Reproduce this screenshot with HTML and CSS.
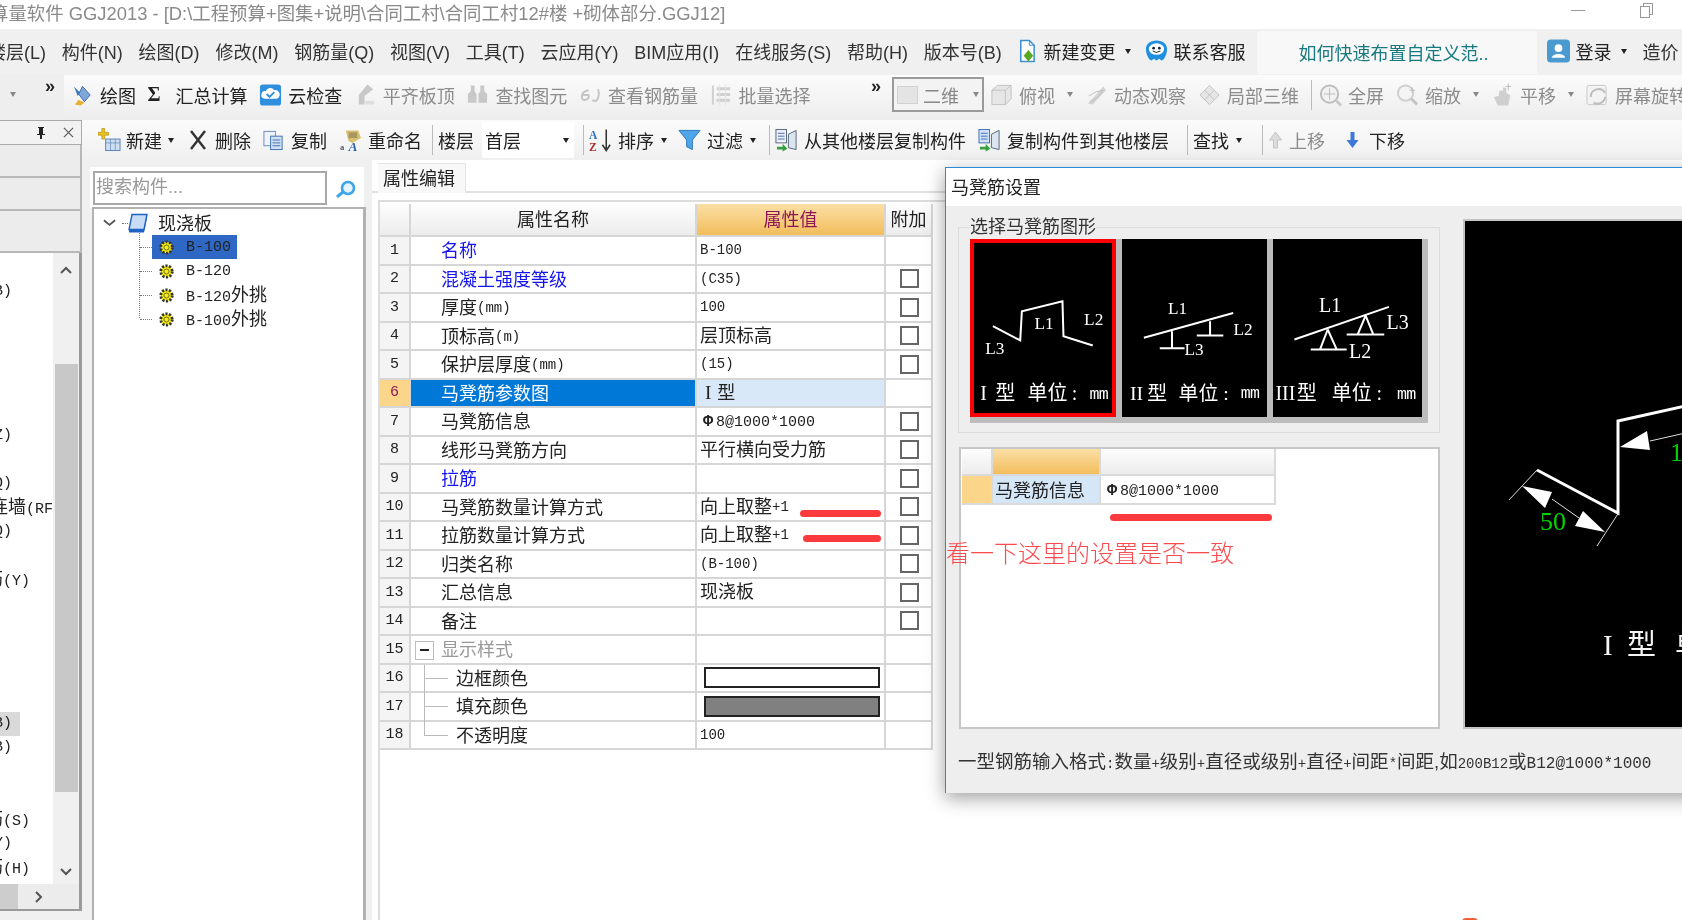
FILE: index.html
```html
<!DOCTYPE html>
<html lang="zh-CN">
<head>
<meta charset="utf-8">
<title>GGJ2013</title>
<link rel="stylesheet" href="styles.css">
</head>
<body>
<div class="app">
  <header class="titlebar">
    <span class="title-text">算量软件 GGJ2013 - [D:\工程预算+图集+说明\合同工村\合同工村12#楼 +砌体部分.GGJ12]</span>
    <span class="win-min"></span>
    <span class="win-max"></span>
  </header>

  <nav class="menubar">
    <span class="menu-item first">楼层(L)</span>
    <span class="menu-item">构件(N)</span>
    <span class="menu-item">绘图(D)</span>
    <span class="menu-item">修改(M)</span>
    <span class="menu-item">钢筋量(Q)</span>
    <span class="menu-item">视图(V)</span>
    <span class="menu-item">工具(T)</span>
    <span class="menu-item">云应用(Y)</span>
    <span class="menu-item">BIM应用(I)</span>
    <span class="menu-item">在线服务(S)</span>
    <span class="menu-item">帮助(H)</span>
    <span class="menu-item">版本号(B)</span>
    <span class="tool menu-tool change">
      <svg class="ic" viewBox="0 0 24 24"><path d="M6 1h9l5 5v17H6z" fill="#fff" stroke="#3f8fd0" stroke-width="1.6"/><path d="M15 1v5h5" fill="none" stroke="#3f8fd0"/><path d="M14 11l5 6-5 6-5-6z" fill="#58a820"/></svg>
      <span>新建变更</span><i class="caret"></i>
    </span>
    <span class="tool menu-tool">
      <svg class="ic" viewBox="0 0 24 24"><path d="M12 1c7 0 11 4 11 9 0 7-4 12-6 12l-2-2-3 2-3-2-2 2c-2 0-6-5-6-12C1 5 5 1 12 1z" fill="#1f8fe0"/><ellipse cx="12" cy="10" rx="8" ry="6" fill="#fff"/><circle cx="9" cy="9" r="1.4" fill="#123"/><circle cx="15" cy="9" r="1.4" fill="#123"/><path d="M8 12q4 3 8 0" stroke="#123" fill="none"/></svg>
      <span>联系客服</span>
    </span>
    <span class="help-tab">如何快速布置自定义范..</span>
    <span class="tool login">
      <svg class="ic" viewBox="0 0 24 24"><rect x="0" y="0" width="24" height="24" rx="4" fill="#4a9ad0"/><circle cx="12" cy="9" r="4" fill="#fff"/><path d="M5 19c1-5 13-5 14 0z" fill="#fff"/></svg>
      <span>登录</span><i class="caret"></i>
    </span>
    <span class="menu-item">造价</span>
  </nav>

  <div class="toolbar tb1">
    <div class="grp grp-a"><i class="caret grey"></i><span class="more">»</span></div>
    <div class="grp grp-b">
      <span class="tool"><svg class="ic" viewBox="0 0 24 24"><path d="M3 3l7 7-3 3z" fill="#3d7bc4"/><path d="M12 3l8 9-6 7-6-8z" fill="#7fa8d8" stroke="#3d6ba8"/><path d="M8 17l6 3-4 3-6-1z" fill="#e8b030"/></svg><span>绘图</span></span>
      <span class="tool"><b class="sigma">Σ</b><span class="wide-gap">汇总计算</span></span>
      <span class="tool"><svg class="ic" viewBox="0 0 24 24"><rect x="1" y="1" width="22" height="22" rx="3" fill="#2f8fdc"/><path d="M6 16a4 4 0 0 1 1-8 5 5 0 0 1 9-1 4 4 0 0 1 2 9z" fill="#fff"/><path d="M8 11l3 3 5-5" fill="none" stroke="#2f8fdc" stroke-width="2"/></svg><span>云检查</span></span>
      <span class="tool off"><svg class="ic" viewBox="0 0 24 24"><path d="M14 1l6 5-9 7v9H5V12z" fill="#c8c8c8"/><path d="M12 18h9v4h-9z" fill="#ddd"/></svg><span>平齐板顶</span></span>
      <span class="tool off"><svg class="ic" viewBox="0 0 24 24"><path d="M5 2h4v6l2 3v9H2v-9l3-3zM15 2h4v6l3 3v9h-9v-9l2-3z" fill="#c8c8c8"/></svg><span>查找图元</span></span>
      <span class="tool off"><svg class="ic" viewBox="0 0 24 24"><path d="M10 7Q3 8 3 14q0 4 4 3t3-5H4M20 6q2 8-2 12-2 1-4-1" fill="none" stroke="#c4c4c4" stroke-width="2"/></svg><span>查看钢筋量</span></span>
      <span class="tool off"><svg class="ic" viewBox="0 0 24 24"><path d="M2 2h2v20H2zM7 4h14v3H7zM7 10h14v3H7zM7 16h14v3H7z" fill="#d0d0d0"/><path d="M10 1v22M16 1v22" stroke="#e2e2e2"/></svg><span>批量选择</span></span>
      <span class="more push">»</span>
    </div>
    <div class="grp grp-c">
      <span class="combo-2d"><i class="swatch-2d"></i><span>二维</span><i class="caret grey"></i></span>
      <span class="tool off"><svg class="ic" viewBox="0 0 24 24"><path d="M2 7l6-5h14v14l-6 6H2z" fill="#e6e6e6" stroke="#c0c0c0"/><path d="M2 7h14v15M16 7l6-5" fill="none" stroke="#c0c0c0"/></svg><span>俯视</span><i class="caret grey"></i></span>
      <span class="tool off"><svg class="ic" viewBox="0 0 24 24"><path d="M3 21L19 3l3 4-14 15z" fill="#d4d4d4"/><path d="M4 13q8-6 16-6M5 19q8-2 13-11" fill="none" stroke="#bbb"/></svg><span>动态观察</span></span>
      <span class="tool off"><svg class="ic" viewBox="0 0 24 24"><path d="M12 2l10 10-10 10L2 12z" fill="#e6e6e6" stroke="#c0c0c0"/><path d="M7 7l10 10M17 7L7 17" stroke="#c0c0c0"/></svg><span>局部三维</span></span>
      <i class="sep"></i>
      <span class="tool off"><svg class="ic" viewBox="0 0 24 24"><circle cx="11" cy="11" r="9" fill="#f2f2f2" stroke="#bdbdbd" stroke-width="2"/><path d="M11 5v12M5 11h12" stroke="#bdbdbd"/><path d="M18 18l5 5" stroke="#c8c8c8" stroke-width="3"/></svg><span>全屏</span></span>
      <span class="tool off"><svg class="ic" viewBox="0 0 24 24"><circle cx="10" cy="10" r="8" fill="#f4f4f4" stroke="#cfcfcf" stroke-width="2"/><path d="M16 16l6 6" stroke="#c4c4c4" stroke-width="3"/><path d="M17 4v6M14 7h6" stroke="#bdbdbd"/></svg><span>缩放</span><i class="caret grey"></i></span>
      <span class="tool off"><svg class="ic" viewBox="0 0 24 24"><path d="M7 23l-4-9 5-1 1-6 3 1 1-4 3 1v5l4 2-2 11z" fill="#cfcfcf"/><path d="M18 0v7M15 3h6" stroke="#bdbdbd"/></svg><span>平移</span><i class="caret grey"></i></span>
      <span class="tool off"><svg class="ic" viewBox="0 0 24 24"><rect x="1" y="2" width="20" height="20" rx="2" fill="#f3f3f3" stroke="#c8c8c8"/><path d="M5 14a8 8 0 0 1 15-4M20 14a8 8 0 0 1-12 6" fill="none" stroke="#bdbdbd" stroke-width="2"/></svg><span>屏幕旋转</span></span>
    </div>
  </div>

  <div class="work">
    <aside class="left">
      <div class="pin-head">
        <svg class="pin" viewBox="0 0 10 14"><path d="M2 1h6v1H7v6h2v1H6v4H4V9H1V8h2V2H2z" fill="#222"/></svg>
        <svg class="close" viewBox="0 0 12 12"><path d="M1 1l10 10M11 1L1 11" stroke="#555" stroke-width="1.2"/></svg>
      </div>
      <div class="left-box b33"></div>
      <div class="left-box b33"></div>
      <div class="left-box b42"></div>
      <div class="list-wrap">
        <div class="list">
          <div class="li"></div>
          <div class="li"><span class="cut-a">B)</span></div>
          <div class="li"></div><div class="li"></div><div class="li"></div><div class="li"></div>
          <div class="li"></div>
          <div class="li"><span class="cut-a">Z)</span></div>
          <div class="li"></div>
          <div class="li"><span class="cut-a">Q)</span></div>
          <div class="li"><span class="cut-c">连墙<b class="mono">(RF</b></span></div>
          <div class="li"><span class="cut-a">Q)</span></div>
          <div class="li"></div>
          <div class="li"><span class="cut-b">筋<b class="mono">(Y)</b></span></div>
          <div class="li"></div><div class="li"></div><div class="li"></div><div class="li"></div><div class="li"></div>
          <div class="li hl"><span class="cut-a">B)</span></div>
          <div class="li"><span class="cut-a">B)</span></div>
          <div class="li"></div><div class="li"></div>
          <div class="li"><span class="cut-b">筋<b class="mono">(S)</b></span></div>
          <div class="li"><span class="cut-a">Y)</span></div>
          <div class="li"><span class="cut-b">筋<b class="mono">(H)</b></span></div>
        </div>
        <div class="vscroll">
          <svg class="chev" viewBox="0 0 12 8"><path d="M1 7l5-5 5 5" fill="none" stroke="#555" stroke-width="2"/></svg>
          <div class="vthumb"></div>
          <svg class="chev" viewBox="0 0 12 8"><path d="M1 1l5 5 5-5" fill="none" stroke="#555" stroke-width="2"/></svg>
        </div>
      </div>
      <div class="hscroll">
        <div class="hthumb"></div>
        <svg class="chev-r" viewBox="0 0 8 12"><path d="M1 1l5 5-5 5" fill="none" stroke="#555" stroke-width="2"/></svg>
      </div>
    </aside>

    <div class="right">
      <div class="toolbar tb2">
        <span class="tool t-new"><svg class="ic" viewBox="0 0 24 24"><path d="M4 0h3v4h4v3H7v4H4V7H0V4h4z" fill="#e8c020" stroke="#a88a10" stroke-width=".6"/><rect x="8" y="11" width="15" height="12" fill="#cfdff2" stroke="#5a80b8"/><path d="M8 15h15M13 11v12M18 11v12" stroke="#5a80b8" stroke-width=".7"/></svg><span>新建</span><i class="caret"></i></span>
        <span class="tool t-del"><svg class="ic small" viewBox="0 0 18 20"><path d="M2 1l14 18M16 1L2 19" stroke="#333" stroke-width="2.4"/></svg><span>删除</span></span>
        <span class="tool t-copy"><svg class="ic" viewBox="0 0 24 24"><rect x="2" y="3" width="12" height="15" fill="#f0f4fa" stroke="#6a8cb8"/><rect x="9" y="8" width="12" height="14" fill="#cfe0f4" stroke="#3f70b0"/><path d="M11 12h8M11 15h8M11 18h8" stroke="#3f70b0"/></svg><span>复制</span></span>
        <span class="tool t-ren"><svg class="ic" viewBox="0 0 24 24"><path d="M7 2h13l3 8-9 5-4-2z" fill="#d8c070"/><path d="M10 4h9v6h-9z" fill="#a89860"/><text class="ic-a" x="1" y="22">a</text><text class="ic-A" x="10" y="23">A</text></svg><span>重命名</span></span>
        <i class="sep"></i>
        <span class="floor-label">楼层</span>
        <span class="floor-combo"><span>首层</span><i class="caret"></i></span>
        <i class="sep"></i>
        <span class="tool t-sort"><svg class="ic" viewBox="0 0 24 24"><text class="ic-az blue" x="0" y="11">A</text><text class="ic-az red" x="0" y="23">Z</text><path d="M18 1v20M14 17l4 6 4-6" fill="none" stroke="#333" stroke-width="1.6"/></svg><span>排序</span><i class="caret"></i></span>
        <span class="tool t-filter"><svg class="ic" viewBox="0 0 24 24"><path d="M1 2h22l-8 10v10l-6-3v-7z" fill="#4ea6e8" stroke="#2a78c0"/></svg><span>过滤</span><i class="caret"></i></span>
        <i class="sep"></i>
        <span class="tool t-from"><svg class="ic" viewBox="0 0 24 24"><rect x="1" y="1" width="11" height="14" fill="#eef" stroke="#567"/><path d="M3 5h7M3 8h7M3 11h7" stroke="#3f70b0"/><path d="M14 6l8-4v20l-8-2z" fill="#dbe4ef" stroke="#567"/><path d="M2 19h6v-3l5 5-5 3v-2H2z" fill="#37a040"/></svg><span>从其他楼层复制构件</span></span>
        <span class="tool t-to"><svg class="ic" viewBox="0 0 24 24"><rect x="1" y="1" width="11" height="14" fill="#cfe0f8" stroke="#3f70b0"/><path d="M3 5h7M3 8h7M3 11h7" stroke="#3f70b0"/><path d="M14 6l8-4v20l-8-2z" fill="#dbe4ef" stroke="#567"/><path d="M2 19h6v-3l5 5-5 3v-2H2z" fill="#37a040"/></svg><span>复制构件到其他楼层</span></span>
        <i class="sep"></i>
        <span class="tool t-find"><span>查找</span><i class="caret"></i></span>
        <i class="sep"></i>
        <span class="tool off t-up"><svg class="ic arrow" viewBox="0 0 14 18"><path d="M7 1l6 8H9v8H5V9H1z" fill="#dcdcdc" stroke="#c4c4c4"/></svg><span>上移</span></span>
        <span class="tool t-down"><svg class="ic arrow" viewBox="0 0 14 18"><path d="M7 17l6-8H9V1H5v8H1z" fill="#3f78d8"/></svg><span>下移</span></span>
      </div>

      <div class="content">
        <section class="tree-col">
          <div class="search">
            <span class="search-field">搜索构件...</span>
            <svg class="search-ic" viewBox="0 0 22 18"><circle cx="13" cy="8" r="6" fill="#e4f4fd" stroke="#3ea4e6" stroke-width="2.6"/><path d="M8 12l-6 5" stroke="#3ea4e6" stroke-width="3"/></svg>
          </div>
          <div class="tree">
            <div class="root">
              <svg class="tw" viewBox="0 0 14 8"><path d="M1 1l6 5 6-5" fill="none" stroke="#555" stroke-width="2"/></svg>
              <i class="dots-h"></i>
              <svg class="book" viewBox="0 0 20 20"><path d="M4 1h15l-3 15H1z" fill="#c7dcf6" stroke="#1f62c4" stroke-width="1.4"/><path d="M1 16h15l3-15v3l-3 15H1z" fill="#1f62c4"/></svg>
              <span class="root-label">现浇板</span>
            </div>
            <div class="kids">
              <div class="kid-row"><span class="kid sel"><svg class="gear" viewBox="0 0 16 16"><circle cx="8" cy="8" r="5.4" fill="#f6ee00" stroke="#333" stroke-width="2.6" stroke-dasharray="2 1.4"/><circle cx="8" cy="8" r="2.4" fill="#f6ee00" stroke="#554" stroke-width=".8"/></svg><span class="mono">B-100</span></span></div>
              <div class="kid-row"><span class="kid"><svg class="gear" viewBox="0 0 16 16"><circle cx="8" cy="8" r="5.4" fill="#f6ee00" stroke="#333" stroke-width="2.6" stroke-dasharray="2 1.4"/><circle cx="8" cy="8" r="2.4" fill="#f6ee00" stroke="#554" stroke-width=".8"/></svg><span class="mono">B-120</span></span></div>
              <div class="kid-row"><span class="kid"><svg class="gear" viewBox="0 0 16 16"><circle cx="8" cy="8" r="5.4" fill="#f6ee00" stroke="#333" stroke-width="2.6" stroke-dasharray="2 1.4"/><circle cx="8" cy="8" r="2.4" fill="#f6ee00" stroke="#554" stroke-width=".8"/></svg><span class="mixed"><b class="mono">B-120</b>外挑</span></span></div>
              <div class="kid-row"><span class="kid"><svg class="gear" viewBox="0 0 16 16"><circle cx="8" cy="8" r="5.4" fill="#f6ee00" stroke="#333" stroke-width="2.6" stroke-dasharray="2 1.4"/><circle cx="8" cy="8" r="2.4" fill="#f6ee00" stroke="#554" stroke-width=".8"/></svg><span class="mixed"><b class="mono">B-100</b>外挑</span></span></div>
            </div>
          </div>
        </section>

        <section class="props">
          <div class="tabbar"><span class="tab">属性编辑</span></div>
          <div class="table-area">
            <div class="grid">
              <div class="c hd"></div><div class="c hd ctr">属性名称</div><div class="c hd-on ctr">属性值</div><div class="c hd ctr">附加</div>

              <div class="c num">1</div><div class="c name link">名称</div><div class="c val"><span class="m">B-100</span></div><div class="c add"></div>
              <div class="c num">2</div><div class="c name link">混凝土强度等级</div><div class="c val"><span class="m">(C35)</span></div><div class="c add"><i class="chk"></i></div>
              <div class="c num">3</div><div class="c name">厚度<span class="m">(mm)</span></div><div class="c val"><span class="m">100</span></div><div class="c add"><i class="chk"></i></div>
              <div class="c num">4</div><div class="c name">顶标高<span class="m">(m)</span></div><div class="c val">层顶标高</div><div class="c add"><i class="chk"></i></div>
              <div class="c num">5</div><div class="c name">保护层厚度<span class="m">(mm)</span></div><div class="c val"><span class="m">(15)</span></div><div class="c add"><i class="chk"></i></div>
              <div class="c num on">6</div><div class="c name sel">马凳筋参数图</div><div class="c val sel-val"><span class="type-i">I</span> 型</div><div class="c add"></div>
              <div class="c num">7</div><div class="c name">马凳筋信息</div><div class="c val"><span class="m rebar"><b>Φ</b>8@1000*1000</span></div><div class="c add"><i class="chk"></i></div>
              <div class="c num">8</div><div class="c name">线形马凳筋方向</div><div class="c val">平行横向受力筋</div><div class="c add"><i class="chk"></i></div>
              <div class="c num">9</div><div class="c name link">拉筋</div><div class="c val"></div><div class="c add"><i class="chk"></i></div>
              <div class="c num">10</div><div class="c name">马凳筋数量计算方式</div><div class="c val">向上取整<span class="m">+1</span><i class="mark m10"></i></div><div class="c add"><i class="chk"></i></div>
              <div class="c num">11</div><div class="c name">拉筋数量计算方式</div><div class="c val">向上取整<span class="m">+1</span><i class="mark m11"></i></div><div class="c add"><i class="chk"></i></div>
              <div class="c num">12</div><div class="c name">归类名称</div><div class="c val"><span class="m">(B-100)</span></div><div class="c add"><i class="chk"></i></div>
              <div class="c num">13</div><div class="c name">汇总信息</div><div class="c val">现浇板</div><div class="c add"><i class="chk"></i></div>
              <div class="c num">14</div><div class="c name">备注</div><div class="c val"></div><div class="c add"><i class="chk"></i></div>
              <div class="c num">15</div><div class="c name group"><i class="minus"></i><span>显示样式</span></div><div class="c val"></div><div class="c add"></div>
              <div class="c num">16</div><div class="c name sub">边框颜色</div><div class="c val"><i class="color white"></i></div><div class="c add"></div>
              <div class="c num">17</div><div class="c name sub">填充颜色</div><div class="c val"><i class="color gray"></i></div><div class="c add"></div>
              <div class="c num">18</div><div class="c name sub last">不透明度</div><div class="c val"><span class="m">100</span></div><div class="c add"></div>
            </div>
          </div>
        </section>
      </div>
    </div>
  </div>

  <div class="dialog">
    <div class="dlg-title">马凳筋设置</div>
    <div class="dlg-body">
      <div class="dlg-row">
        <div class="dlg-left">
          <div class="groupbox">
            <span class="legend">选择马凳筋图形</span>
            <div class="shots">
              <div class="shot s1 picked">
                <svg viewBox="75 238 437 535">
                  <path class="wire" d="M143 500L225 543 230 455 352 425 355 530 443 558"/>
                  <text class="lbl" x="120" y="583">L3</text><text class="lbl" x="268" y="510">L1</text><text class="lbl" x="417" y="497">L2</text>
                  <text class="cap" x="105" y="722">I</text><text class="cap" x="150" y="722">型</text><text class="cap" x="247" y="722">单位</text><text class="cap" x="380" y="722">:</text><text class="cap unit" x="433" y="718">mm</text>
                </svg>
              </div>
              <div class="shot s2">
                <svg viewBox="529 238 438 535">
                  <path class="wire" d="M595 535L865 460M680 515V567M643 567H718M795 485V528M755 528H835"/>
                  <text class="lbl" x="668" y="462">L1</text><text class="lbl" x="866" y="527">L2</text><text class="lbl" x="718" y="587">L3</text>
                  <text class="cap" x="553" y="722">II</text><text class="cap" x="605" y="722">型</text><text class="cap" x="700" y="722">单位</text><text class="cap" x="835" y="722">:</text><text class="cap unit" x="888" y="718">mm</text>
                </svg>
              </div>
              <div class="shot s3">
                <svg viewBox="985 238 445 535">
                  <path class="wire" d="M1048 540L1332 442M1148 510L1125 570M1148 510L1175 570M1097 570H1205M1262 468L1238 525M1262 468L1285 525M1205 525H1318"/>
                  <text class="lbl big" x="1122" y="457">L1</text><text class="lbl big" x="1325" y="510">L3</text><text class="lbl big" x="1212" y="596">L2</text>
                  <text class="cap" x="991" y="722">III</text><text class="cap" x="1055" y="722">型</text><text class="cap" x="1160" y="722">单位</text><text class="cap" x="1295" y="722">:</text><text class="cap unit" x="1356" y="718">mm</text>
                </svg>
              </div>
            </div>
          </div>
          <div class="infobox">
            <div class="mini">
              <div class="mc mh"></div><div class="mc mh-on"></div><div class="mc mh"></div>
              <div class="mc mn-on"></div><div class="mc mname">马凳筋信息</div><div class="mc mval"><span class="m rebar"><b>Φ</b>8@1000*1000</span></div>
            </div>
            <i class="mark m-info"></i>
            <p class="note">看一下这里的设置是否一致</p>
          </div>
        </div>
        <div class="preview">
          <svg class="preview-svg" viewBox="1465 221 217 506">
            <path class="bar" d="M1537 470L1618 513V421L1690 405"/>
            <path class="thin" d="M1537 470L1509 500M1618.500 513L1597 546M1552 499L1579 518M1650 441L1690 432"/>
            <path class="head" d="M1522 486L1552 492 1545 508zM1605 532L1575 526 1583 511zM1620 447L1647 431 1650 450z"/>
            <text class="dim" x="1540" y="530">50</text>
            <text class="dim" x="1670" y="461">1</text>
            <text class="big-cap" x="1603" y="655">I</text><text class="big-cap" x="1627" y="655">型</text><text class="big-cap" x="1675" y="655">单</text>
          </svg>
        </div>
      </div>
      <p class="hint">一型钢筋输入格式<span class="m">:</span>数量<span class="m">+</span>级别<span class="m">+</span>直径或级别<span class="m">+</span>直径<span class="m">+</span>间距<span class="m">*</span>间距,如<span class="m">200B12</span>或<span class="ml">B12@1000*1000</span></p>
    </div>
  </div>
  <i class="red-tip"></i>
</div>
</body>
</html>
```

FILE: styles.css
```css
* { box-sizing: border-box; }
html, body { margin: 0; width: 1682px; height: 920px; overflow: hidden; background: #fff; }
body { font-family: "Liberation Sans", "Noto Sans CJK SC", sans-serif; font-size: 18px; color: #222; }
i { display: block; font-style: normal; }
p { margin: 0; }
.app { position: relative; width: 1682px; height: 920px; overflow: hidden; display: flex; flex-direction: column; filter: blur(.35px); }
.mono, .m, .ml { font-family: "Liberation Mono", "Noto Sans CJK SC", monospace; font-weight: 400; }
.m { font-size: 14px; }
.ml { font-size: 16px; }
.mono { font-size: 15px; }
.rebar { margin-left: 3px; font-size: 15px; }
.rebar b { display: inline-block; width: 13px; font-size: 17px; font-weight: 700; }
.type-i { font-family: "Liberation Serif", serif; font-size: 19px; }

/* title */
.titlebar { height: 29px; flex: none; background: #fff; display: flex; align-items: center; position: relative; white-space: nowrap; padding-bottom: 6px; }
.title-text { margin-left: -10px; color: #8a8a8a; font-size: 18.4px; }
.win-min { position: absolute; left: 1571px; top: 10px; width: 14px; height: 1px; background: #999; }
.win-max { position: absolute; left: 1640px; top: 6px; width: 10px; height: 12px; border: 1px solid #999; background: #fff; box-shadow: 3px -3px 0 -1px #fff, 3px -3px 0 0 #999; }

/* menu */
.menubar { height: 46px; flex: none; background: #f0f0f0; display: flex; align-items: center; white-space: nowrap; padding-bottom: 2px; }
.menu-item { margin-right: 15.8px; flex: none; color: #333; }
.menu-item.first { margin-left: -12px; }
.tool { display: flex; align-items: center; gap: 6px; margin-right: 11px; flex: none; white-space: nowrap; }
.menu-tool { margin-right: 14px; }
.change { margin-left: -3px; }
.help-tab { width: 280px; height: 43px; flex: none; margin: 2px 10px 0 -3px; background: #f8f8f8; border-radius: 4px 4px 0 0; display: flex; align-items: center; padding-left: 42px; color: #177a80; }
.login { margin-right: 16px; }
.ic { width: 23px; height: 24px; flex: none; display: block; }
.ic.small { width: 18px; height: 20px; }
.ic.arrow { width: 15px; height: 18px; }
.caret { width: 0; height: 0; border-left: 3.5px solid transparent; border-right: 3.5px solid transparent; border-top: 5px solid #222; margin-left: 3px; flex: none; }
.caret.grey { border-top-color: #888; }
.sep { width: 1px; height: 30px; background: #bbb; flex: none; }

/* toolbars */
.toolbar { display: flex; align-items: center; white-space: nowrap; }
.tb1 { height: 45px; flex: none; background: linear-gradient(#fbfbfb, #ededed); }
.grp { display: flex; align-items: center; height: 100%; flex: none; }
.grp-a { width: 64px; padding-left: 7px; gap: 29px; background: #eeeeee; }
.grp-b { width: 821px; padding-left: 7px; padding-right: 4px; }
.grp-c { padding-left: 7px; }
.tb1 .grp { padding-bottom: 6px; }
.grp-b .tool { margin-right: 11.6px; }
.more { font-weight: 700; font-size: 18px; line-height: 1; align-self: flex-start; margin-top: 2px; }
.more.push { margin-left: auto; margin-right: 0; }
.off { color: #8c8c8c; }
.sigma { font-family: "Liberation Serif", serif; font-size: 20px; width: 15px; color: #222; }
.wide-gap { margin-left: 7px; }
.combo-2d { width: 92px; height: 35px; border: 2px solid #9a9a9a; background: #f3f3f3; display: flex; align-items: center; gap: 5px; padding-left: 3px; margin-right: 6px; color: #888; flex: none; }
.swatch-2d { width: 21px; height: 18px; background: #e4e4e4; border: 1px solid #d2d2d2; }
.combo-2d .caret { margin-left: 9px; }
.grp-c .tool { margin-right: 12px; }
.grp-c .tool .caret { margin-left: 6px; }
.grp-c .sep { margin: 0 7px 0 0; }

/* work area */
.work { flex: 1; display: flex; min-height: 0; background: #f0f0f0; }
.left { width: 82px; flex: none; display: flex; flex-direction: column; }
.pin-head { height: 25px; flex: none; background: #f2f2f2; border: 1px solid #aaa; border-left: 0; display: flex; align-items: center; position: relative; }
.pin { width: 10px; height: 14px; margin-left: 36px; }
.close { width: 11px; height: 11px; margin-left: 17px; }
.left-box { flex: none; background: #ececec; border-bottom: 2px solid #b8b8b8; border-right: 2px solid #b8b8b8; }
.b33 { height: 33px; }
.b42 { height: 42px; }
.list-wrap { height: 631px; flex: none; display: flex; border-right: 3px solid #9a9a9a; }
.list { width: 53px; flex: none; background: #fff; padding-top: 3px; font-size: 15px; overflow: hidden; white-space: nowrap; }
.li { height: 24px; line-height: 24px; }
.li.hl { background: linear-gradient(90deg, #d9d9d9 20px, transparent 20px); }
.li span { display: block; font-family: "Liberation Mono", "Noto Sans CJK SC", monospace; }
.cut-a { margin-left: -6px; }
.cut-b { margin-left: -15px; font-size: 18px; }
.cut-c { margin-left: -10px; font-size: 18px; }
.vscroll { flex: 1; background: #f0f0f0; display: flex; flex-direction: column; align-items: center; padding-top: 13px; }
.chev { width: 12px; height: 8px; flex: none; }
.vthumb { width: 23px; height: 428px; margin: 90px 0 76px; background: #c8c8c8; flex: none; }
.hscroll { height: 27px; flex: none; display: flex; align-items: center; background: #ececec; border-right: 3px solid #9a9a9a; border-bottom: 2px solid #9a9a9a; }
.hthumb { width: 18px; height: 100%; background: #cdcdcd; }
.chev-r { width: 8px; height: 12px; margin-left: 17px; }

.right { flex: 1; min-width: 0; display: flex; flex-direction: column; }
.tb2 { height: 40px; flex: none; padding-left: 16px; background: linear-gradient(#fbfbfb, #f0f0f0); }
.tb2 .tool { margin-right: 12px; }
.tb2 .caret { margin-left: 1px; }
.tb2 .sep { margin-right: 5px; }
.tb2 .t-new { margin-right: 15px; gap: 5px; }
.tb2 .t-del { margin-right: 11px; gap: 8px; }
.tb2 .t-copy { margin-right: 12px; }
.tb2 .t-ren { margin-right: 10px; }
.tb2 .t-sort { margin-right: 11px; }
.tb2 .t-filter { margin-right: 13px; }
.tb2 .t-to { margin-right: 18px; }
.tb2 .t-find { margin-right: 20px; }
.tb2 .t-up { margin-right: 20px; }
.tb2 .t-down { gap: 9px; }
.floor-label { margin-right: 8px; flex: none; }
.floor-combo { width: 92px; height: 36px; background: #fff; display: flex; align-items: center; justify-content: space-between; padding: 0 5px 0 3px; margin-right: 9px; flex: none; }

.content { flex: 1; min-height: 0; display: flex; }
.tree-col { width: 290px; flex: none; padding: 7px 8px 0 8px; display: flex; flex-direction: column; }
.search { height: 41px; flex: none; background: #fff; display: flex; align-items: flex-start; padding: 4px 0 0 3px; }
.search-field { width: 234px; height: 34px; border: 2px solid #a8a8a8; color: #999; background: #fff; display: flex; align-items: center; padding: 0 0 6px 1px; font-size: 18px; flex: none; }
.search-ic { width: 22px; height: 18px; margin: 9px 0 0 8px; }
.tree { flex: 1; background: #fff; border: 2px solid #b2b2b2; border-bottom: 0; border-right-width: 3px; margin: -1px -2px 0 2px; padding-top: 2px; }
.root { height: 24px; display: flex; align-items: center; position: relative; }
.tw { width: 13px; height: 8px; margin-left: 9px; flex: none; }
.dots-h { width: 6px; border-top: 1px dotted #777; margin-left: 6px; flex: none; }
.book { width: 20px; height: 21px; flex: none; }
.root-label { margin: 0 0 2px 10px; }
.kids { position: relative; }
.kids::before { content: ""; position: absolute; left: 45px; top: -2px; height: 85px; border-left: 1px dotted #777; }
.kid-row { height: 24px; padding-left: 58px; position: relative; display: flex; }
.kid-row::before { content: ""; position: absolute; left: 46px; top: 12px; width: 12px; border-top: 1px dotted #777; }
.kid { display: inline-flex; align-items: center; gap: 12px; padding: 0 6px; height: 24px; }
.kid.sel { background: #2e68c4; }
.kid .mono { font-size: 15px; }
.kid .mixed { margin-top: -4px; }
.gear { width: 17px; height: 17px; flex: none; margin-right: -1px; }

/* properties */
.props { flex: 1; min-width: 0; background: #fff; padding: 3px 0 0 6px; display: flex; flex-direction: column; }
.tabbar { height: 30px; flex: none; border-bottom: 2px solid #e0e0e0; margin-left: -6px; padding-left: 6px; }
.tab { display: block; width: 88px; height: 30px; padding-left: 5px; line-height: 31px; background: #f8f8f8; border: 1px solid #e4e4e4; border-bottom: 0; border-left: 0; }
.table-area { flex: 1; margin-top: 7px; border-left: 2px solid #dcdcdc; border-top: 2px solid #dcdcdc; padding-top: 2px; }
.grid { display: grid; grid-template-columns: 31px 286px 189px 47px; grid-template-rows: 33px repeat(18, 28.5px); width: 553px; }
.c { border-right: 2px solid #d6d6d6; border-bottom: 2px solid #d6d6d6; display: flex; align-items: center; position: relative; white-space: nowrap; line-height: 1; }
.ctr { justify-content: center; }
.hd { background: linear-gradient(#fdfdfd, #ececec); }
.hd-on { background: linear-gradient(#fbdfa6, #f2bd5c); color: #8e1458; }
.num { background: #f4f4f4; justify-content: center; font-family: "Liberation Mono", monospace; font-size: 15px; }
.num.on { background: #fbd58a; color: #8e1458; }
.name { padding: 2px 0 0 30px; }
.name.link { color: #1414f0; }
.name.sel { background: #0078d7; color: #fff; }
.val { padding-left: 3px; }
.sel-val { background: #d8e8f8; padding-left: 8px; gap: 6px; }
.add { justify-content: center; }
.chk { width: 19px; height: 19px; background: #fff; border: 2px solid #666; margin-left: 1px; }
.mark { position: absolute; height: 7px; border-radius: 4px; background: #fb3a3e; }
.m10 { left: 103px; top: 16px; width: 81px; }
.m11 { left: 106px; top: 13px; width: 78px; }
.group { padding: 2px 0 0 4px; gap: 7px; color: #999; }
.minus { width: 19px; height: 19px; border: 1px solid #bdbdbd; background: linear-gradient(#222, #222) center / 9px 2px no-repeat; flex: none; }
.sub { padding-left: 45px; }
.sub::before { content: ""; position: absolute; left: 13px; top: 0; bottom: -2px; border-left: 1px solid #bbb; }
.sub::after { content: ""; position: absolute; left: 13px; top: 13px; width: 24px; border-top: 1px solid #bbb; }
.sub.last::before { bottom: 13px; }
.color { width: 176px; height: 21px; margin-left: 4px; border: 2px solid #222; }
.color.white { background: #fff; }
.color.gray { background: #808080; }

/* dialog */
.dialog { position: absolute; left: 945px; top: 167px; width: 800px; height: 626px; background: #eee; border-top: 1px solid #2b8ad6; border-left: 1px solid #2b8ad6; box-shadow: 0 5px 18px rgba(0, 0, 0, .38); display: flex; flex-direction: column; }
.dlg-title { height: 38px; flex: none; background: #fff; display: flex; align-items: center; padding: 0 0 3px 5px; }
.dlg-body { flex: 1; padding: 13px 0 0 12px; display: flex; flex-direction: column; }
.dlg-row { display: flex; gap: 23px; flex: none; height: 510px; }
.dlg-left { width: 482px; flex: none; padding-top: 8px; display: flex; flex-direction: column; gap: 14px; }
.groupbox { height: 206px; flex: none; border: 1px solid #dcdcdc; padding: 11px; position: relative; }
.legend { position: absolute; left: 11px; top: -12px; background: #eee; line-height: 22px; white-space: nowrap; color: #333; }
.shots { width: 458px; height: 184px; background: #bcbcbc; display: flex; gap: 6px; align-items: flex-start; }
.shot { height: 178px; background: #000; flex: none; }
.shot svg { display: block; width: 100%; height: 100%; }
.s1 { width: 146px; }
.s2 { width: 145px; }
.s3 { width: 149px; }
.picked { outline: 4px solid #f00; outline-offset: -4px; }
.wire { fill: none; stroke: #fff; stroke-width: 6; }
.lbl { fill: #fff; font-family: "Liberation Serif", serif; font-size: 52px; }
.lbl.big { font-size: 60px; }
.cap { fill: #fff; font-family: "Liberation Serif", "Noto Sans CJK SC", serif; font-size: 60px; }
.cap.unit { font-family: "Liberation Mono", monospace; font-size: 50px; letter-spacing: -2px; }
.infobox { height: 282px; flex: none; margin-left: 1px; background: #fff; border: 2px solid #c6c6c6; padding: 0 0 0 1px; position: relative; }
.mini { display: grid; grid-template-columns: 31px 108px 175px; grid-template-rows: 27px 29px; width: 314px; }
.mc { display: flex; align-items: center; border-right: 2px solid #dadada; border-bottom: 2px solid #dadada; line-height: 1; white-space: nowrap; }
.mh { background: linear-gradient(#fdfdfd, #ececec); }
.mh-on { background: linear-gradient(#fbdfa6, #f2bd5c); }
.mn-on { background: #fbd58a; }
.mname { background: #d5e7f7; padding: 3px 0 0 2px; }
.mval { background: #fff; padding: 2px 0 0 3px; }
.m-info { left: 149px; top: 65px; width: 162px; }
.note { position: absolute; left: -15px; top: 90px; color: #fb4a4e; font-size: 24px; line-height: 30px; white-space: nowrap; font-weight: 300; }
.preview { flex: 1; background: #000; border: 2px solid #c4c4c4; position: relative; overflow: hidden; }
.preview-svg { display: block; width: 217px; height: 506px; }
.bar { fill: none; stroke: #fff; stroke-width: 3; }
.thin { fill: none; stroke: #ddd; stroke-width: 1; }
.head { fill: #fff; }
.dim { fill: #00d400; font-family: "Liberation Serif", serif; font-size: 26px; }
.big-cap { fill: #f4f4f4; font-family: "Liberation Serif", "Noto Sans CJK SC", serif; font-size: 29px; }
.hint { margin-top: 21px; line-height: 24px; white-space: nowrap; font-size: 18.5px; color: #333; }
.red-tip { position: absolute; left: 1462px; top: 918px; width: 16px; height: 4px; background: #f0603a; border-radius: 8px 8px 0 0; }

/* small svg text */
.ic-a { font: 700 9px "Liberation Serif", serif; fill: #556; }
.ic-A { font: italic 700 14px "Liberation Serif", serif; fill: #2a5fae; }
.ic-az { font: 700 12px "Liberation Serif", serif; }
.ic-az.blue { fill: #2a6fc8; }
.ic-az.red { fill: #b03030; }
```
